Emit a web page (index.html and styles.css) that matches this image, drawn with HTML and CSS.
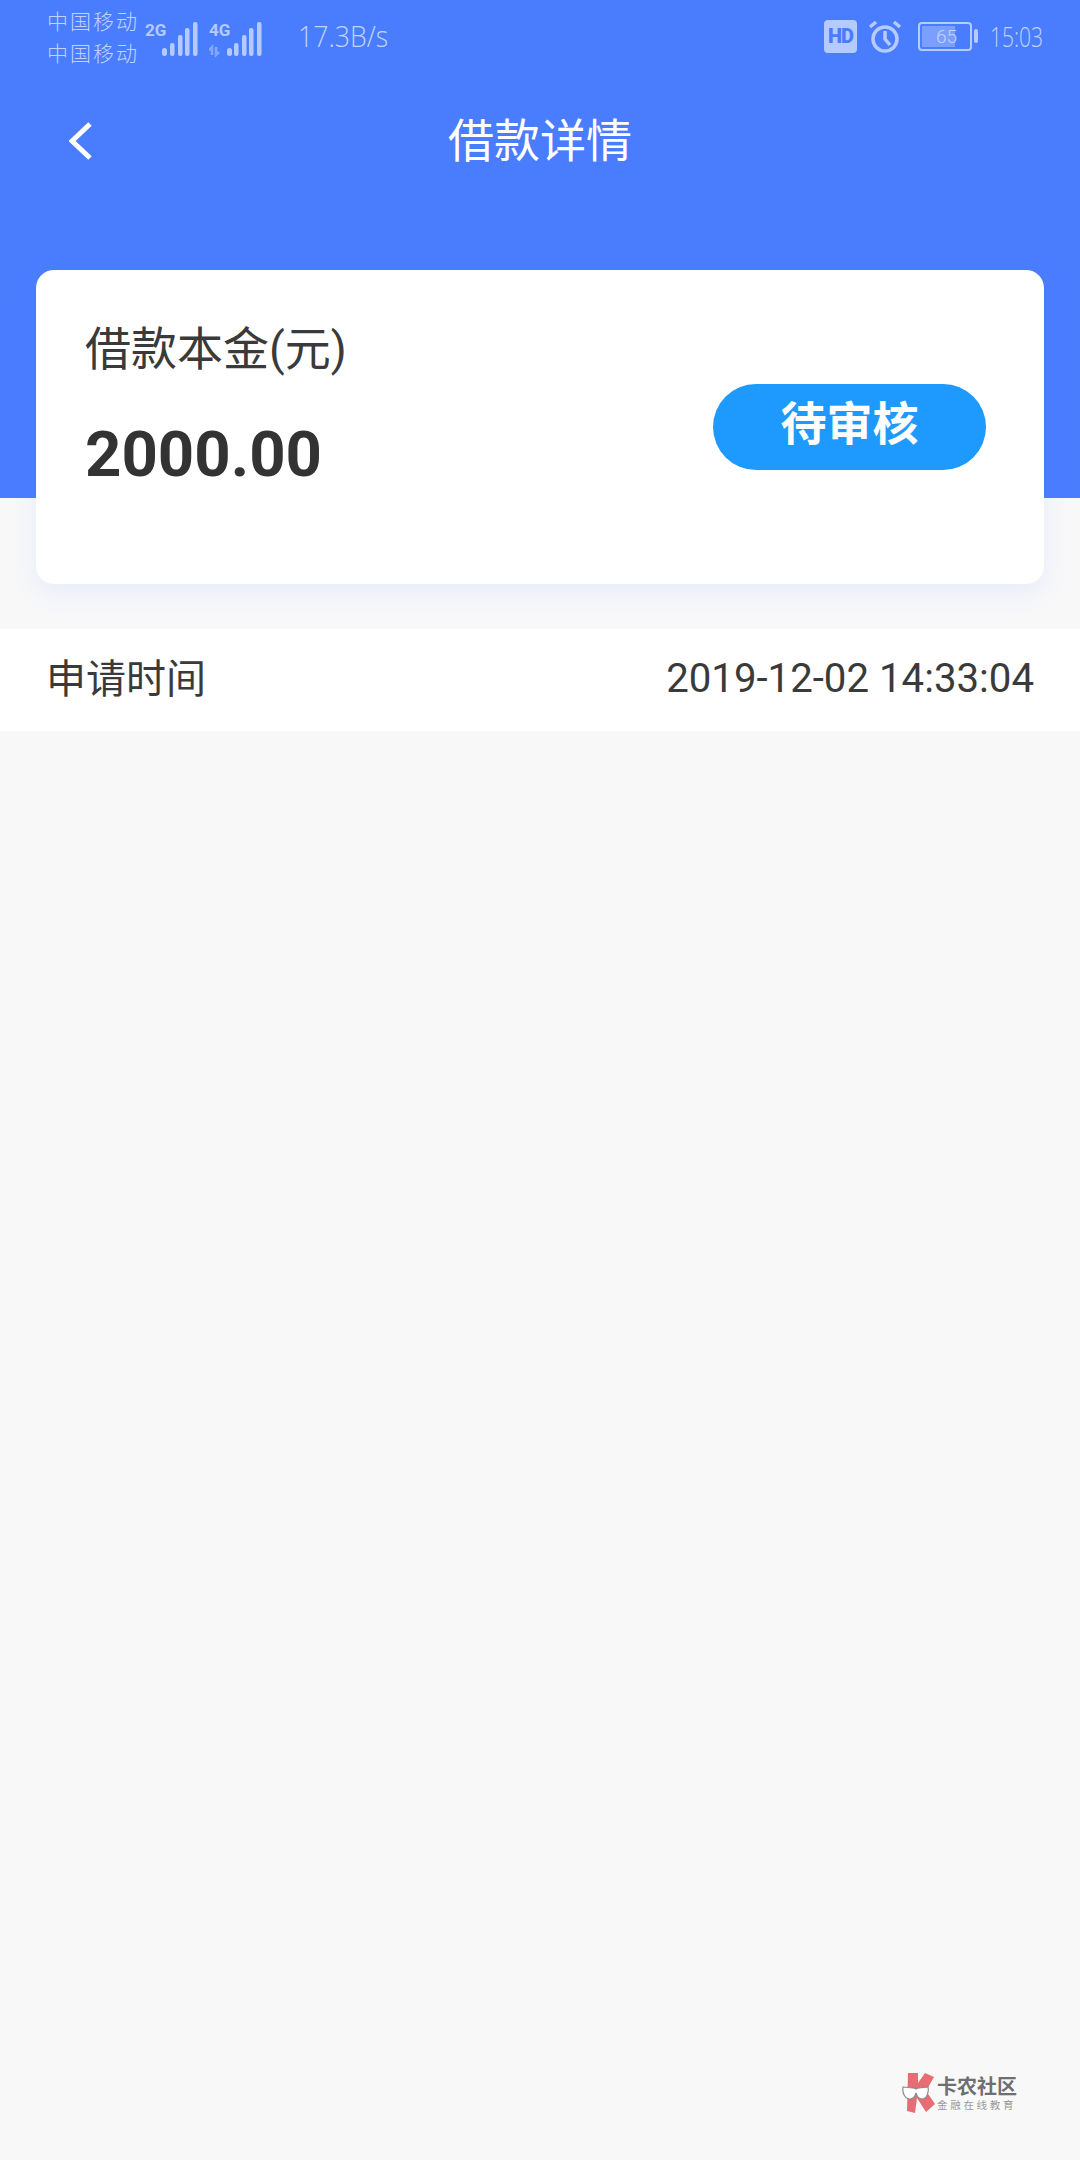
FILE: index.html
```html
<!DOCTYPE html>
<html lang="zh-CN">

<head>
    <meta charset="UTF-8">
    <meta name="viewport" content="width=device-width, initial-scale=1.0">
    <title>借款详情</title>
    <link rel="stylesheet" href="styles.css">
</head>

<body>
    <div class="header">
        <div class="status-bar">
            <div class="carriers">
                <div>中国移动</div>
                <div>中国移动</div>
            </div>
            <svg class="signal" width="53" height="40" viewBox="0 0 53 40">
                <text x="0" y="19" class="net">2G</text>
                <rect x="17" y="31" width="5" height="8" rx="2.5" />
                <rect x="25" y="26" width="4.5" height="13" rx="2" />
                <rect x="33" y="18" width="4.5" height="21" rx="2" />
                <rect x="40" y="11" width="4.5" height="28" rx="2" />
                <rect x="48" y="5" width="4.5" height="34" rx="2" />
            </svg>
            <svg class="signal second" width="53" height="40" viewBox="0 0 53 40">
                <text x="0" y="19" class="net">4G</text>
                <path class="arrows" d="M3 38v-8l-3 3M7 30v8l3-3" />
                <rect x="18" y="31" width="5" height="8" rx="2.5" />
                <rect x="25" y="26" width="4.5" height="13" rx="2" />
                <rect x="33" y="18" width="4.5" height="21" rx="2" />
                <rect x="40" y="11" width="4.5" height="28" rx="2" />
                <rect x="48" y="5" width="4.5" height="34" rx="2" />
            </svg>
            <div class="speed">17.3B/s</div>
            <div class="status-right">
                <div class="hd">HD</div>
                <svg class="alarm" width="34" height="33" viewBox="0 0 34 33">
                    <circle cx="17" cy="19" r="12" />
                    <path d="M17 11v8l5 6M2 7l6-5M32 7l-6-5" />
                </svg>
                <div class="battery">
                    <div class="battery-body">
                        <div class="battery-fill"></div>
                        <span>65</span>
                    </div>
                    <div class="battery-cap"></div>
                </div>
                <div class="clock">15:03</div>
            </div>
        </div>
        <div class="nav">
            <svg class="back" width="24" height="38" viewBox="0 0 24 38">
                <path d="M21 2L3 19l18 17" />
            </svg>
            <div class="nav-title">借款详情</div>
        </div>
    </div>

    <div class="card">
        <div class="card-left">
            <div class="card-label">借款本金(元)</div>
            <div class="card-amount">2000.00</div>
        </div>
        <div class="status-pill">待审核</div>
    </div>

    <div class="row">
        <div class="row-name">申请时间</div>
        <div class="row-value">2019-12-02 14:33:04</div>
    </div>

    <div class="watermark">
        <svg width="33" height="40" viewBox="0 0 33 40">
            <path class="k" d="M6 0h10v10l7-10 9 4-8 14 9 13-9 8-9-14-2 15-8-2z" />
            <path class="glasses" d="M1 14l10 1c2 0 3 1 3 1s1-1 3-1l9-1c1 5-1 12-6 12-3 0-5-2-6-6-1 4-3 6-6 6-5 0-8-6-7-12z" />
        </svg>
        <div class="watermark-text">
            <div class="watermark-name">卡农社区</div>
            <div class="watermark-sub">金融在线教育</div>
        </div>
    </div>
</body>

</html>
```

FILE: styles.css
```css
html,
body {
    margin: 0;
    padding: 0;
}

body {
    position: relative;
    width: 1080px;
    height: 2160px;
    overflow: hidden;
    background-color: #F8F8F9;
    font-family: Roboto, "Noto Sans CJK SC", sans-serif;
    color: #333333;
}

.header {
    height: 498px;
    background-color: #4A7DFE;
    box-sizing: border-box;
}

.status-bar {
    height: 72px;
    padding: 0 38px 0 47px;
    display: flex;
    align-items: center;
    color: #C0D3FF;
}

.carriers {
    width: 98px;
    font-family: "Noto Sans CJK SC", sans-serif;
    font-size: 21px;
    font-weight: 300;
    line-height: 32px;
    letter-spacing: 2px;
    white-space: nowrap;
}

.signal {
    margin-top: 2px;
}

.signal.second {
    margin-left: 11px;
}

.signal rect {
    fill: #B5CBFF;
}

.net {
    font-family: "Roboto", sans-serif;
    font-size: 17px;
    font-weight: 700;
    fill: #B5CBFF;
}

.arrows {
    fill: none;
    stroke: #83A6FF;
    stroke-width: 2.5;
}

.speed {
    width: 90px;
    margin-left: 36px;
    font-family: "Open Sans", sans-serif;
    font-size: 29px;
    font-weight: 300;
    white-space: nowrap;
    transform: translateY(-1px) scaleX(0.92);
    transform-origin: left center;
}

.status-right {
    margin-left: auto;
    display: flex;
    align-items: center;
}

.hd {
    width: 33px;
    height: 33px;
    border-radius: 4px;
    background-color: #B5CBFF;
    color: #4A7DFE;
    font-size: 20px;
    font-weight: 900;
    line-height: 33px;
    text-align: center;
    letter-spacing: -1px;
}

.alarm {
    margin-left: 11px;
}

.alarm circle,
.alarm path {
    fill: none;
    stroke: #B5CBFF;
    stroke-width: 3.5;
}

.battery {
    margin-left: 16px;
    display: flex;
    align-items: center;
}

.battery-body {
    position: relative;
    width: 50px;
    height: 25px;
    border: 2px solid #B5CBFF;
    border-radius: 4px;
}

.battery-fill {
    width: 33px;
    height: 21px;
    margin: 2px 0 0 2px;
    background-color: #7C9FFF;
}

.battery-body span {
    position: absolute;
    top: 0;
    left: 16px;
    font-size: 19px;
    font-weight: 300;
    line-height: 25px;
}

.battery-cap {
    width: 4px;
    height: 14px;
    margin-left: 2px;
    border-radius: 2px;
    background-color: #B5CBFF;
}

.clock {
    width: 52px;
    margin-left: 12px;
    font-family: "Open Sans", sans-serif;
    font-size: 27px;
    font-weight: 300;
    white-space: nowrap;
    transform: scaleX(0.78);
    transform-origin: left center;
}

.nav {
    position: relative;
    height: 136px;
    display: flex;
    align-items: center;
    justify-content: center;
}

.back {
    position: absolute;
    left: 69px;
    top: 50px;
}

.back path {
    fill: none;
    stroke: #FFFFFF;
    stroke-width: 5;
}

.nav-title {
    font-family: "Noto Sans CJK SC", sans-serif;
    font-size: 46px;
    font-weight: 400;
    color: #FFFFFF;
    transform: translateY(-3px);
}

.card {
    height: 314px;
    margin: -228px 36px 0 36px;
    padding: 0 58px 0 49px;
    display: flex;
    align-items: flex-start;
    justify-content: space-between;
    position: relative;
    background-color: #FFFFFF;
    border-radius: 18px;
    box-shadow: 0 8px 24px rgba(74, 125, 254, 0.1);
}

.card-left {
    padding-top: 47px;
}

.card-label {
    font-family: Roboto, "Noto Sans CJK SC", sans-serif;
    font-size: 46px;
    line-height: 64px;
    color: #3A3A3A;
}

.card-amount {
    margin-top: 35px;
    font-size: 63.5px;
    font-weight: 700;
    line-height: 78px;
}

.status-pill {
    width: 273px;
    height: 86px;
    margin-top: 114px;
    border-radius: 43px;
    background-color: #1E9AFF;
    color: #FFFFFF;
    font-family: "Noto Sans CJK SC", sans-serif;
    font-size: 46px;
    font-weight: 700;
    line-height: 72px;
    text-align: center;
}

.row {
    height: 102px;
    margin-top: 45px;
    padding: 0 46px 0 47px;
    display: flex;
    align-items: center;
    justify-content: space-between;
    background-color: #FFFFFF;
}

.row-name {
    font-family: "Noto Sans CJK SC", sans-serif;
    font-size: 40px;
    margin-left: -1px;
    padding-bottom: 8px;
    color: #3A3A3A;
}

.row-value {
    font-size: 40.2px;
    padding-bottom: 3px;
    color: #3A3A3A;
}

.watermark {
    position: absolute;
    left: 902px;
    top: 2073px;
    display: flex;
    align-items: center;
    gap: 2px;
}

.k {
    fill: #E86C74;
}

.glasses {
    fill: #FFFFFF;
    stroke: #8A8A8A;
    stroke-width: 1.2;
}

.watermark-name {
    font-family: "Noto Sans CJK SC", sans-serif;
    font-size: 20px;
    font-weight: 700;
    line-height: 24px;
    color: #6F6F6F;
}

.watermark-sub {
    font-family: "Noto Sans CJK SC", sans-serif;
    font-size: 10.5px;
    line-height: 14px;
    letter-spacing: 2.7px;
    color: #9A9A9A;
    white-space: nowrap;
}
```
